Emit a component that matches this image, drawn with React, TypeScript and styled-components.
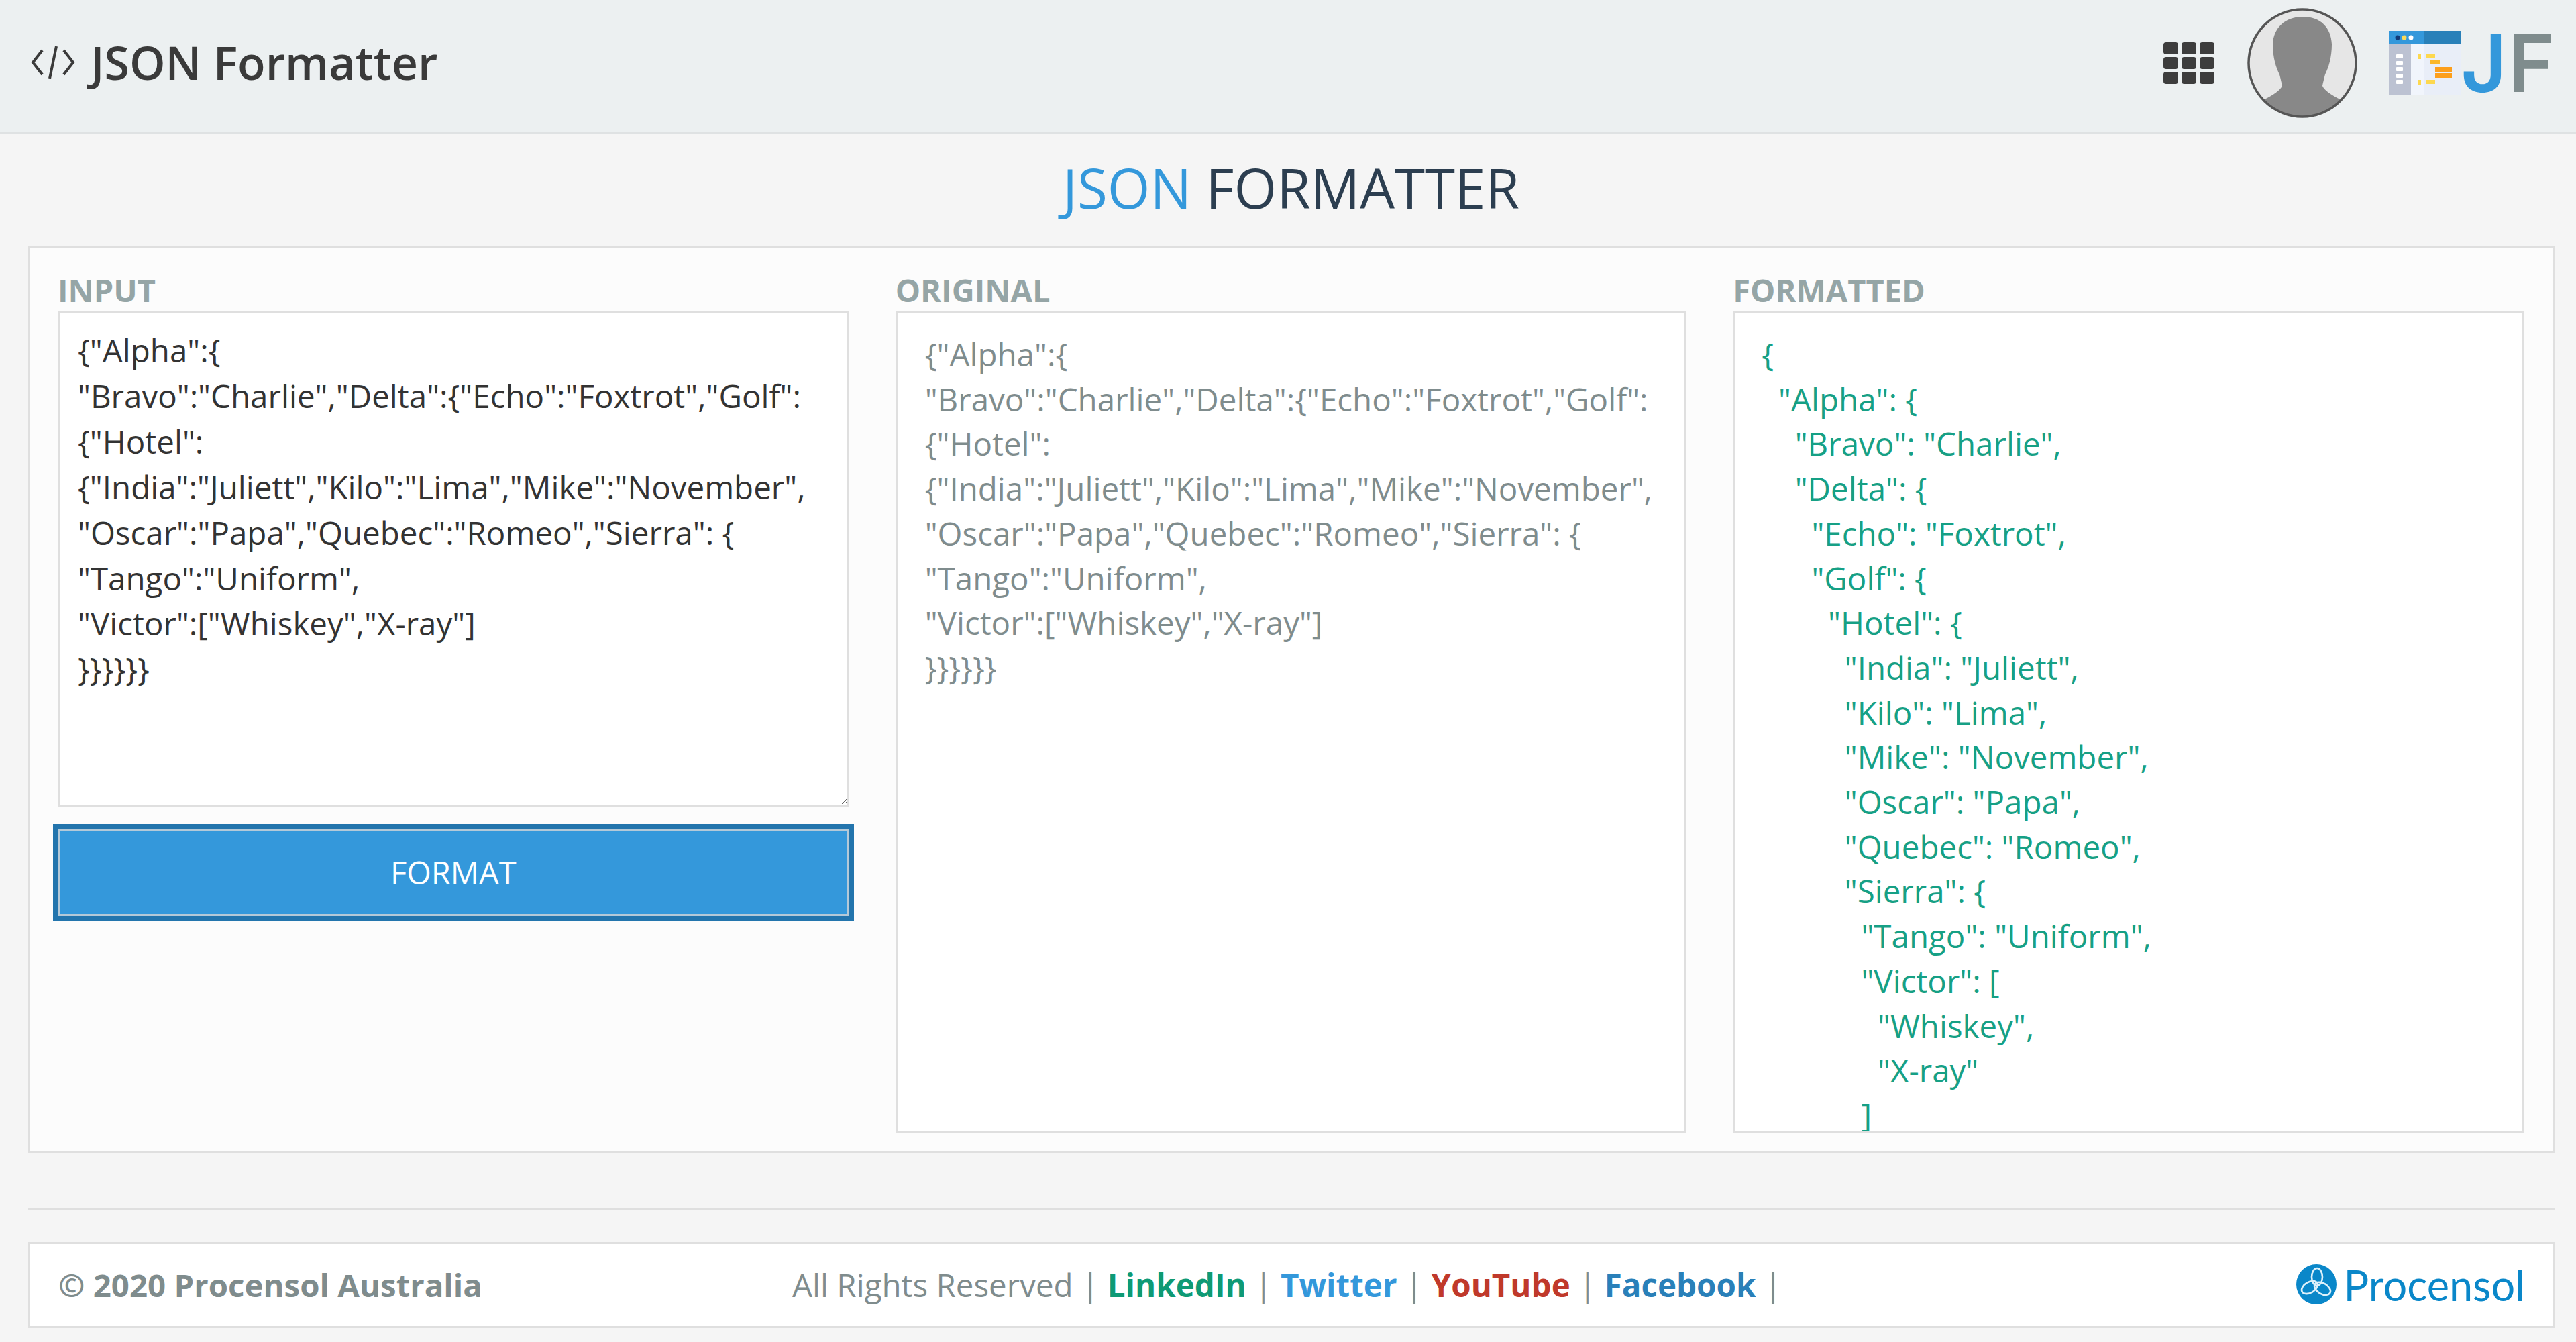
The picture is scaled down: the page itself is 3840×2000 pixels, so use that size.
import React from "react";
import styled, { createGlobalStyle } from "styled-components";

const GlobalStyle = createGlobalStyle`
  * {
    box-sizing: border-box;
  }

  html,
  body {
    margin: 0;
    padding: 0;
    background: #f5f5f5;
    font-family: "Open Sans", "Liberation Sans", sans-serif;
  }
`;

const Page = styled.div`
  width: 3840px;
  height: 2000px;
  overflow: hidden;
  display: flex;
  flex-direction: column;
`;

const Header = styled.header`
  height: 200px;
  flex: none;
  display: flex;
  align-items: center;
  justify-content: space-between;
  padding: 0 30px 10px 46px;
  background: #ecf0f1;
  border-bottom: 3px solid #dfe2e3;
`;

const Brand = styled.div`
  display: flex;
  align-items: center;
  gap: 23px;
`;

const BrandName = styled.span`
  font-size: 68.2px;
  font-weight: 600;
  color: #3a3a3a;
  line-height: 1;
`;

const HeaderTools = styled.div`
  display: flex;
  align-items: center;
`;

const AppsIcon = styled.svg`
  width: 76px;
  height: 62px;
  margin-right: 48px;
`;

const Avatar = styled.svg`
  width: 166px;
  height: 166px;
  margin-right: 46px;
`;

const AppIcon = styled.svg`
  width: 107px;
  height: 95px;
`;

const LogoLetters = styled.span`
  font-family: Inter, "Liberation Sans", sans-serif;
  font-size: 118px;
  font-weight: 600;
  line-height: 1;
  letter-spacing: 2px;
  color: #7f8c8d;
`;

const LogoJ = styled.span`
  color: #3498db;
`;

const Main = styled.main`
  flex: none;
  padding: 0 32px 0 41px;
`;

const PageTitle = styled.h1`
  margin: 0;
  height: 167px;
  padding-top: 27px;
  text-align: center;
  font-size: 81.8px;
  font-weight: 400;
  line-height: 105px;
  color: #2c3e50;
`;

const TitleAccent = styled.span`
  color: #3498db;
`;

const Panel = styled.section`
  height: 1351px;
  display: grid;
  grid-template-columns: repeat(3, 1fr);
  gap: 69px;
  padding: 30px 42px 25px;
  background: #fcfcfc;
  border: 3px solid #dfdfdf;
`;

const Column = styled.div`
  min-width: 0;
  display: flex;
  flex-direction: column;
`;

const Label = styled.label`
  height: 64px;
  font-size: 47px;
  font-weight: 700;
  line-height: 64px;
  color: #95a5a6;
`;

const InputBox = styled.textarea`
  display: block;
  width: 100%;
  height: 738px;
  margin: 0;
  padding: 21px 27px;
  background: #fff;
  border: 3px solid #dfdfdf;
  border-radius: 0;
  outline: none;
  overflow: hidden;
  font-family: "Open Sans", "Liberation Sans", sans-serif;
  font-size: 47.5px;
  line-height: 67.9px;
  color: #333;
`;

const FormatButton = styled.button`
  width: 100%;
  height: 130px;
  margin-top: 33px;
  padding: 0;
  background: #3498db;
  border: 3px solid #b4c9d8;
  outline: 7px solid #2375ad;
  font-family: "Open Sans", "Liberation Sans", sans-serif;
  font-size: 47px;
  font-weight: 400;
  color: #fff;
`;

const OutputBox = styled.pre<{ $tone: string; $leftPad: number }>`
  height: 1224px;
  margin: 0;
  padding: 28px 20px 0 ${({ $leftPad }) => $leftPad}px;
  overflow: hidden;
  background: #fff;
  border: 3px solid #dfdfdf;
  white-space: pre-wrap;
  font-family: "Open Sans", "Liberation Sans", sans-serif;
  font-size: 47.5px;
  line-height: 66.7px;
  color: ${({ $tone }) => $tone};
`;

const Divider = styled.hr`
  height: 3px;
  margin: 82px 0 48px;
  border: 0;
  background: #dfdfdf;
`;

const Footer = styled.footer`
  height: 128px;
  display: flex;
  align-items: center;
  padding: 0 41px 2px 43px;
  background: #fff;
  border: 3px solid #dfdfdf;
`;

const Copyright = styled.strong`
  width: 1094px;
  flex: none;
  font-size: 47.4px;
  font-weight: 700;
  color: #7f8c8d;
`;

const FooterLinks = styled.div`
  flex: 1;
  display: flex;
  align-items: center;
  font-size: 47.5px;
  color: #7f8c8d;
`;

const FooterLink = styled.a<{ $color: string }>`
  font-weight: 700;
  color: ${({ $color }) => $color};
`;

const Bar = styled.span`
  margin: 0 12.5px;
  font-weight: 400;
`;

const ProcensolLogo = styled.div`
  display: flex;
  align-items: center;
  gap: 11px;
`;

const ProcensolMark = styled.svg`
  width: 60px;
  height: 60px;
`;

const ProcensolName = styled.span`
  font-family: Lato, "Liberation Sans", sans-serif;
  font-size: 63px;
  font-weight: 400;
  line-height: 1;
  color: #0a87c9;
`;

const INPUT_TEXT = `{"Alpha":{
"Bravo":"Charlie","Delta":{"Echo":"Foxtrot","Golf":
{"Hotel":
{"India":"Juliett","Kilo":"Lima","Mike":"November",
"Oscar":"Papa","Quebec":"Romeo","Sierra": {
"Tango":"Uniform",
"Victor":["Whiskey","X-ray"]
}}}}}}`;

const FORMATTED_TEXT = `{
  "Alpha": {
    "Bravo": "Charlie",
    "Delta": {
      "Echo": "Foxtrot",
      "Golf": {
        "Hotel": {
          "India": "Juliett",
          "Kilo": "Lima",
          "Mike": "November",
          "Oscar": "Papa",
          "Quebec": "Romeo",
          "Sierra": {
            "Tango": "Uniform",
            "Victor": [
              "Whiskey",
              "X-ray"
            ]
          }
        }
      }
    }
  }
}`;

const FOOTER_LINKS = [
  { label: "LinkedIn", color: "#0e9a75" },
  { label: "Twitter", color: "#3498db" },
  { label: "YouTube", color: "#c0392b" },
  { label: "Facebook", color: "#2980b9" },
];

function CodeGlyph() {
  return (
    <svg width="66" height="50" viewBox="0 0 66 50" fill="none" stroke="#3a3a3a" strokeWidth="4">
      <path d="M17 7 3 25l14 18" />
      <path d="M49 7l14 18-14 18" />
      <path d="M38 1 28 49" />
    </svg>
  );
}

function GridGlyph() {
  const cells = [0, 1, 2].flatMap((row) => [0, 1, 2].map((col) => ({ row, col })));
  return (
    <AppsIcon viewBox="0 0 76 62">
      {cells.map(({ row, col }) => (
        <rect
          key={`${row}-${col}`}
          x={col * 27}
          y={row * 22}
          width="22"
          height="18"
          rx="4"
          fill="#3d3d3d"
        />
      ))}
    </AppsIcon>
  );
}

function AvatarGlyph() {
  return (
    <Avatar viewBox="0 0 166 166">
      <defs>
        <clipPath id="avatar-clip">
          <circle cx="83" cy="83" r="80" />
        </clipPath>
      </defs>
      <circle cx="83" cy="83" r="80" fill="#e6e6e6" />
      <path
        clipPath="url(#avatar-clip)"
        d="M83 14C58 14 40 30 39 55c0 20 5 35 10 45 2 8 3 12 4 17-3 7-13 13-26 20l-7 29h126l-7-29c-13-7-23-13-26-20 1-5 2-9 4-17 5-10 10-25 10-45-1-25-17-41-42-41z"
        fill="#888"
      />
      <circle cx="83" cy="83" r="80" fill="none" stroke="#555" strokeWidth="3.5" />
    </Avatar>
  );
}

function AppGlyph() {
  return (
    <AppIcon viewBox="0 0 107 95">
      <rect x="0" y="0" width="107" height="95" fill="#f1f5fc" />
      <rect x="53" y="18" width="54" height="77" fill="#e9eef8" />
      <rect x="0" y="18" width="33" height="77" fill="#bcc2d2" />
      <rect x="0" y="0" width="53" height="19" fill="#3498db" />
      <rect x="53" y="0" width="54" height="19" fill="#2980b9" />
      <circle cx="13" cy="10" r="3.5" fill="#123a78" />
      <circle cx="23" cy="10" r="3.5" fill="#fbdb5a" />
      <circle cx="33" cy="10" r="3.5" fill="#fff" />
      {[35, 45, 54, 64, 73].map((y) => (
        <rect key={y} x="11" y={y} width="10" height="6" rx="1" fill="#fff" />
      ))}
      <rect x="43" y="35" width="5" height="7" fill="#fdd84f" />
      <rect x="55" y="35" width="14" height="6" fill="#fdd84f" />
      <rect x="62" y="44" width="14" height="6" fill="#fbb829" />
      <rect x="69" y="54" width="25" height="7" fill="#fd9f1c" />
      <rect x="69" y="63" width="25" height="7" fill="#fd9f1c" />
      <rect x="43" y="73" width="5" height="7" fill="#fdd84f" />
      <rect x="55" y="73" width="14" height="6" fill="#fdd84f" />
    </AppIcon>
  );
}

function TrefoilGlyph() {
  return (
    <ProcensolMark viewBox="0 0 60 60">
      <circle cx="30" cy="30" r="30" fill="#0a87c9" />
      <g fill="none" stroke="#dff1fa" strokeWidth="2.6">
        <ellipse cx="31" cy="19" rx="8" ry="13" />
        <ellipse cx="31" cy="19" rx="8" ry="13" transform="rotate(120 30 30)" />
        <ellipse cx="31" cy="19" rx="8" ry="13" transform="rotate(240 30 30)" />
      </g>
    </ProcensolMark>
  );
}

export default function App() {
  return (
    <>
      <GlobalStyle />
      <Page>
        <Header>
          <Brand>
            <CodeGlyph />
            <BrandName>JSON Formatter</BrandName>
          </Brand>
          <HeaderTools>
            <GridGlyph />
            <AvatarGlyph />
            <AppGlyph />
            <LogoLetters>
              <LogoJ>J</LogoJ>F
            </LogoLetters>
          </HeaderTools>
        </Header>
        <Main>
          <PageTitle>
            <TitleAccent>JSON</TitleAccent> FORMATTER
          </PageTitle>
          <Panel>
            <Column>
              <Label>INPUT</Label>
              <InputBox defaultValue={INPUT_TEXT} />
              <FormatButton>FORMAT</FormatButton>
            </Column>
            <Column>
              <Label>ORIGINAL</Label>
              <OutputBox $tone="#7f8c8d" $leftPad={41}>{INPUT_TEXT}</OutputBox>
            </Column>
            <Column>
              <Label>FORMATTED</Label>
              <OutputBox $tone="#16a085" $leftPad={40}>{FORMATTED_TEXT}</OutputBox>
            </Column>
          </Panel>
          <Divider />
          <Footer>
            <Copyright>© 2020 Procensol Australia</Copyright>
            <FooterLinks>
              All Rights Reserved
              <Bar>|</Bar>
              {FOOTER_LINKS.map((link) => (
                <React.Fragment key={link.label}>
                  <FooterLink $color={link.color}>{link.label}</FooterLink>
                  <Bar>|</Bar>
                </React.Fragment>
              ))}
            </FooterLinks>
            <ProcensolLogo>
              <TrefoilGlyph />
              <ProcensolName>Procensol</ProcensolName>
            </ProcensolLogo>
          </Footer>
        </Main>
      </Page>
    </>
  );
}
